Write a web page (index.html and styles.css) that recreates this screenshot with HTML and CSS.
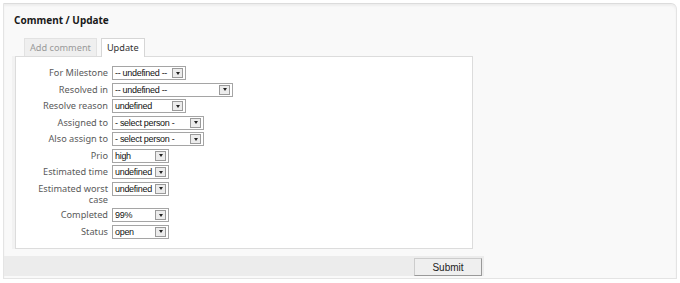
FILE: index.html
```html
<!DOCTYPE html>
<html>
<head>
    <title>Comment / Update</title>
    <link rel="stylesheet" href="styles.css">
</head>
<body>
    <div class="box">
        <h2 class="box-title">Comment / Update</h2>
        <div class="left-col">
            <div class="tabs">
                <span class="tab">Add comment</span>
                <span class="tab active">Update</span>
            </div>
            <div class="panel">
                <table class="form">
                    <tr>
                        <td class="lbl">For Milestone</td>
                        <td><span class="sel w74">-- undefined --<i class="arr"></i></span></td>
                    </tr>
                    <tr>
                        <td class="lbl">Resolved in</td>
                        <td><span class="sel w121">-- undefined --<i class="arr"></i></span></td>
                    </tr>
                    <tr>
                        <td class="lbl">Resolve reason</td>
                        <td><span class="sel w74">undefined<i class="arr"></i></span></td>
                    </tr>
                    <tr>
                        <td class="lbl">Assigned to</td>
                        <td><span class="sel w92">- select person -<i class="arr"></i></span></td>
                    </tr>
                    <tr>
                        <td class="lbl">Also assign to</td>
                        <td><span class="sel w92">- select person -<i class="arr"></i></span></td>
                    </tr>
                    <tr>
                        <td class="lbl">Prio</td>
                        <td><span class="sel w57">high<i class="arr"></i></span></td>
                    </tr>
                    <tr>
                        <td class="lbl">Estimated time</td>
                        <td><span class="sel w57">undefined<i class="arr"></i></span></td>
                    </tr>
                    <tr>
                        <td class="lbl">Estimated worst case</td>
                        <td><span class="sel w57">undefined<i class="arr"></i></span></td>
                    </tr>
                    <tr>
                        <td class="lbl">Completed</td>
                        <td><span class="sel w57">99%<i class="arr"></i></span></td>
                    </tr>
                    <tr>
                        <td class="lbl">Status</td>
                        <td><span class="sel w57">open<i class="arr"></i></span></td>
                    </tr>
                </table>
            </div>
            <div class="footer">
                <button class="submit">Submit</button>
            </div>
        </div>
    </div>
</body>
</html>
```
FILE: styles.css
```css
body {
    margin: 0;
    padding: 3px;
    background-color: #fff;
    font-family: "Noto Sans", Tahoma, sans-serif;
}

.box {
    width: 672px;
    height: 274px;
    background-color: #f9f9f9;
    border: 1px solid #e4e4e4;
    border-top-color: #dcdcdc;
    border-radius: 0 6px 0 0;
    box-shadow: inset 0 2px 2px #eee;
}

.box-title {
    margin: 0;
    padding: 8px 10px 9px;
    font-size: 10px;
    line-height: 17px;
    font-weight: bold;
    color: #1a1a1a;
}

.left-col {
    width: 480px;
}

.tabs {
    display: flex;
    gap: 4px;
    padding-left: 20px;
    height: 18px;
}

.tab {
    font-size: 9.2px;
    line-height: 17px;
    color: #9a9a9a;
    background-color: #efefef;
    border: 1px solid #e2e2e2;
    border-bottom: none;
    padding: 0 5px;
    height: 17px;
}

.tab.active {
    color: #333;
    background-color: #fff;
    border-color: #d6d6d6;
    position: relative;
    z-index: 1;
    height: 18px;
}

.panel {
    margin-left: 11px;
    width: 458px;
    height: 193px;
    box-sizing: border-box;
    background-color: #fff;
    border: 1px solid #dcdcdc;
    box-shadow: -3px 0 0 #f2f2f2;
    padding: 9px 0 0 16px;
}

.form {
    border-collapse: collapse;
}

.form td {
    padding: 0 0 2.5px;
    vertical-align: top;
}

.form .lbl {
    width: 76px;
    padding-right: 4px;
    text-align: right;
    font-size: 9.2px;
    line-height: 11.5px;
    padding-top: 1px;
    color: #5a5a5a;
}

.sel {
    display: flex;
    align-items: center;
    justify-content: space-between;
    box-sizing: border-box;
    height: 14px;
    border: 1px solid #a5a5a5;
    background-color: #fff;
    font-family: "Liberation Sans", Arial, sans-serif;
    font-size: 9px;
    letter-spacing: -0.3px;
    color: #111;
    padding-left: 2px;
    white-space: nowrap;
    overflow: hidden;
}

.w57 { width: 57px; }
.w74 { width: 74px; }
.w92 { width: 92px; }
.w121 { width: 121px; }

.arr {
    flex: none;
    width: 11px;
    height: 10px;
    box-sizing: border-box;
    border: 1px solid #9a9a9a;
    background-color: #ececec;
    margin-right: 2px;
    display: flex;
    align-items: center;
    justify-content: center;
}

.arr::after {
    content: "";
    border-left: 2px solid transparent;
    border-right: 2px solid transparent;
    border-top: 3px solid #222;
}

.footer {
    margin-top: 7px;
    height: 20px;
    background-color: #ececec;
    display: flex;
    justify-content: flex-end;
    align-items: flex-end;
    padding-right: 2px;
}

.submit {
    width: 68px;
    height: 18px;
    background-color: #efefef;
    border: 1px solid #999;
    border-top-color: #ccc;
    border-left-color: #ccc;
    font-family: "Liberation Sans", Arial, sans-serif;
    font-size: 10px;
    color: #222;
    padding: 0;
}
```
